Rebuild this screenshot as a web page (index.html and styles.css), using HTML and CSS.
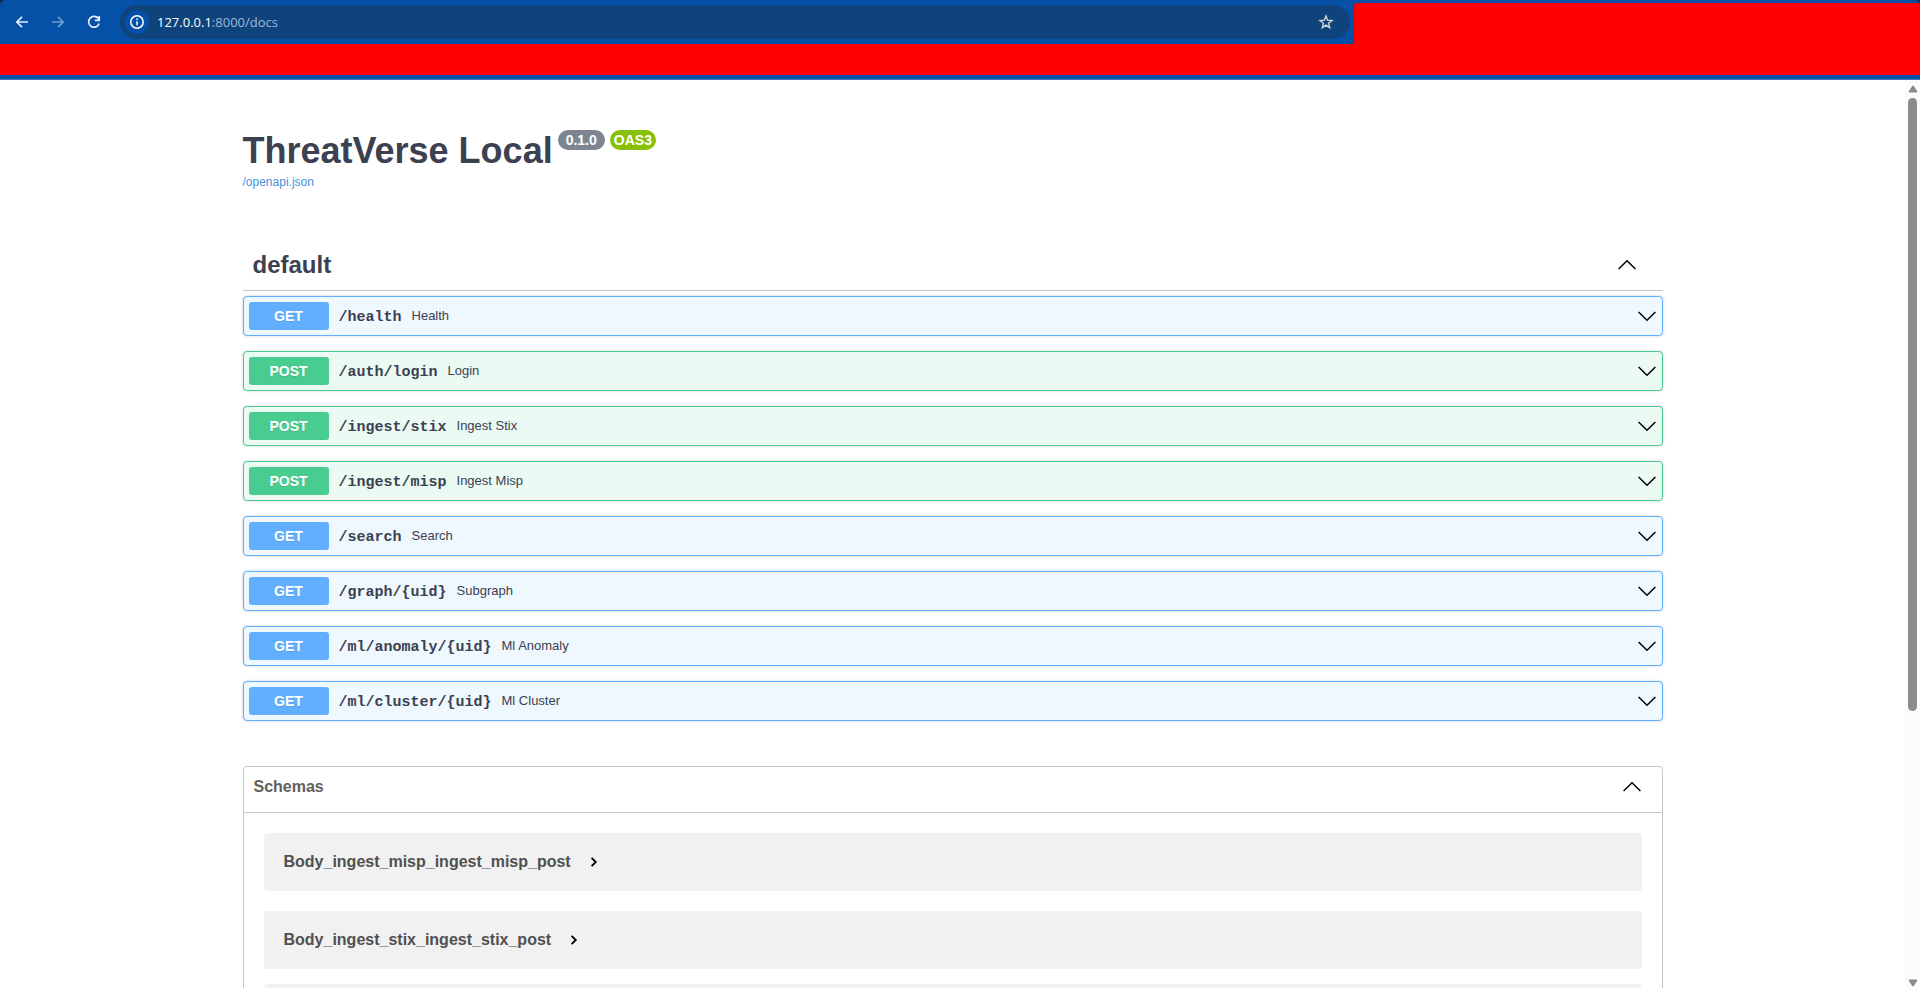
FILE: index.html
```html
<!DOCTYPE html>
<html lang="en">
<head>
<meta charset="utf-8">
<title>ThreatVerse Local</title>
<link rel="stylesheet" href="styles.css">
</head>
<body>
<svg class="defs" aria-hidden="true">
  <symbol id="up" viewBox="0 0 20 20"><path d="M1.600 14 10 5.800 18.400 14" /></symbol>
  <symbol id="down" viewBox="0 0 20 20"><path d="M1.600 6 10 14.200 18.400 6" /></symbol>
  <symbol id="right" viewBox="0 0 12 12"><path d="M3.600 1.800 7.800 6 3.600 10.200" /></symbol>
</svg>
<header class="browser">
  <div class="toolbar">
    <nav class="nav">
      <button class="icon-btn" aria-label="Back"><svg viewBox="0 0 16 16"><path d="M14 8H3M8 2.800 2.800 8 8 13.200" /></svg></button>
      <button class="icon-btn faded" aria-label="Forward"><svg viewBox="0 0 16 16"><path d="M2 8h11M8 2.800 13.200 8 8 13.200" /></svg></button>
      <button class="icon-btn" aria-label="Reload"><svg viewBox="0 0 16 16"><path d="M12.600 4.900A5.400 5.400 0 1 0 13.200 9.400M13.200 2v4.400H8.800" /></svg></button>
    </nav>
    <div class="address">
      <button class="info" aria-label="Site information"><svg viewBox="0 0 16 16"><circle cx="8" cy="8" r="6.200" /><path d="M8 7.200v4M8 4.600v1.400" /></svg></button>
      <span class="url"><b>127.0.0.1</b>:8000/docs</span>
      <button class="star" aria-label="Bookmark"><svg viewBox="0 0 16 16"><path d="M8 2 9.600 6.200l4.400.3-3.400 2.800 1.100 4.300L8 11.200l-3.700 2.400 1.100-4.300L2 6.500l4.400-.3z" /></svg></button>
    </div>
    <div class="cover"></div>
  </div>
  <div class="bookmarks"></div>
</header>
<div class="viewport">
  <main class="page">
    <section class="info-block">
      <h1 class="title">ThreatVerse Local <span class="badges"><span class="badge">0.1.0</span><span class="badge oas">OAS3</span></span></h1>
      <a class="spec" href="#">/openapi.json</a>
    </section>
    <section class="tag">
      <h2 class="tag-head">default<button class="toggle" aria-label="Collapse default"><svg><use href="#up" /></svg></button></h2>
      <div class="ops">
        <button class="op get"><span class="method">GET</span><span class="path">/health</span><span class="desc">Health</span><svg><use href="#down" /></svg></button>
        <button class="op post"><span class="method">POST</span><span class="path">/auth/login</span><span class="desc">Login</span><svg><use href="#down" /></svg></button>
        <button class="op post"><span class="method">POST</span><span class="path">/ingest/stix</span><span class="desc">Ingest Stix</span><svg><use href="#down" /></svg></button>
        <button class="op post"><span class="method">POST</span><span class="path">/ingest/misp</span><span class="desc">Ingest Misp</span><svg><use href="#down" /></svg></button>
        <button class="op get"><span class="method">GET</span><span class="path">/search</span><span class="desc">Search</span><svg><use href="#down" /></svg></button>
        <button class="op get"><span class="method">GET</span><span class="path">/graph/{uid}</span><span class="desc">Subgraph</span><svg><use href="#down" /></svg></button>
        <button class="op get"><span class="method">GET</span><span class="path">/ml/anomaly/{uid}</span><span class="desc">Ml Anomaly</span><svg><use href="#down" /></svg></button>
        <button class="op get"><span class="method">GET</span><span class="path">/ml/cluster/{uid}</span><span class="desc">Ml Cluster</span><svg><use href="#down" /></svg></button>
      </div>
    </section>
    <section class="schemas">
      <h3 class="schemas-head">Schemas<button class="toggle" aria-label="Collapse schemas"><svg><use href="#up" /></svg></button></h3>
      <div class="models">
        <button class="model">Body_ingest_misp_ingest_misp_post<svg><use href="#right" /></svg></button>
        <button class="model">Body_ingest_stix_ingest_stix_post<svg><use href="#right" /></svg></button>
        <div class="model"></div>
      </div>
    </section>
  </main>
  <div class="scrollbar" aria-hidden="true">
    <svg viewBox="0 0 10 8"><path d="M4.200 1 .8 6.200Q.5 7.500 1.500 7.500h7Q9.500 7.500 9.200 6.200L5.800 1Q5 .2 4.200 1z" /></svg>
    <div class="track"><div class="thumb"></div></div>
    <svg viewBox="0 0 10 8"><path d="M4.200 7 .8 1.800Q.5 .5 1.500 .5h7Q9.500 .5 9.200 1.800L5.800 7Q5 7.800 4.200 7z" /></svg>
  </div>
</div>
</body>
</html>
```
FILE: styles.css
```css
* { box-sizing: border-box; }
body {
  margin: 0;
  height: 100vh;
  display: flex;
  flex-direction: column;
  overflow: hidden;
  background: #fff;
  color: #3b4151;
  font-family: "Liberation Sans", Arial, sans-serif;
}
button {
  margin: 0;
  padding: 0;
  border: 0;
  background: none;
  color: inherit;
  font: inherit;
  text-align: left;
}
svg { display: block; fill: none; stroke: currentColor; }
.defs { position: absolute; width: 0; height: 0; }

.browser { flex: none; background: #0a2d57; border-bottom: 1px solid #3a78bd; }
.toolbar { display: flex; height: 44px; border-radius: 6px 6px 0 0; background: #0551a8; }
.nav { display: flex; gap: 20px; align-items: center; padding: 0 18px 0 14px; }
.icon-btn { color: #e6eefa; }
.icon-btn svg { width: 16px; height: 16px; stroke-width: 1.7; }
.icon-btn.faded { color: #6d9bd0; }
.address {
  flex: 1;
  display: flex;
  align-items: center;
  margin: 5px 4px 5px 0;
  padding: 0 16px 0 5px;
  border-radius: 17px;
  background: #0f437c;
}
.info {
  display: grid;
  place-items: center;
  width: 24px;
  height: 24px;
  border-radius: 12px;
  background: #0551a8;
  color: #fff;
}
.info svg { width: 16px; height: 16px; stroke-width: 1.5; }
.url {
  flex: 1;
  margin-left: 8px;
  font: 13px/20px "Open Sans", sans-serif;
  color: #9db9dc;
}
.url b { font-weight: 400; color: #fff; }
.star { color: #d3d6da; }
.star svg { width: 16px; height: 16px; stroke-width: 1.4; }
.cover {
  flex: none;
  width: 566px;
  margin-top: 3px;
  border-top-left-radius: 3px;
  background: #f00;
}
.bookmarks { height: 31px; background: #f00; border-bottom: 0; }
.browser::after { content: ""; display: block; height: 4px; background: #0551a8; }

.viewport { flex: 1; min-height: 0; display: flex; }
.page {
  flex: 1;
  max-width: 1460px;
  margin: 0 auto;
  padding: 0 20px;
  overflow: hidden;
}
.info-block { padding: 50px 0 48px; }
.title { display: flex; gap: 5px; margin: 0; font-size: 36px; line-height: 42px; }
.badges { display: flex; gap: 5px; align-items: flex-start; }
.badge {
  padding: 2px 8px;
  border-radius: 20px;
  background: #7d8492;
  color: #fff;
  font-size: 14px;
  line-height: 16px;
}
.badge.oas { padding: 2px 4px; background: #89bf04; }
.spec { display: block; font-size: 12px; line-height: 20px; color: #4990e2; text-decoration: none; }
.tag-head {
  display: flex;
  align-items: center;
  margin: 0 0 5px;
  padding: 10px 26px 10px 10px;
  border-bottom: 1px solid #c4c6ca;
  font-size: 24px;
  line-height: 30px;
}
.toggle { margin-left: auto; color: #000; }
.toggle svg { width: 20px; height: 20px; stroke-width: 1.5; }
.ops { display: grid; gap: 15px; }
.op {
  display: flex;
  align-items: center;
  gap: 10px;
  padding: 5px;
  border: 1px solid;
  border-radius: 4px;
  box-shadow: 0 0 3px rgba(0, 0, 0, .19);
}
.op.get { border-color: #61affe; background: #eff7ff; }
.op.post { border-color: #49cc90; background: #ebfaf3; }
.method {
  width: 80px;
  border-radius: 3px;
  color: #fff;
  font-size: 14px;
  font-weight: 700;
  line-height: 28px;
  text-align: center;
  text-shadow: 0 1px 0 rgba(0, 0, 0, .1);
}
.get .method { background: #61affe; }
.post .method { background: #49cc90; }
.path { padding-top: 3px; font: 700 15px/20px "Liberation Mono", monospace; }
.desc { flex: 1; padding-bottom: 1px; font-size: 13px; line-height: 18px; }
.op svg { width: 20px; height: 20px; stroke-width: 1.5; color: #000; }
.schemas { margin-top: 45px; border: 1px solid #c4c6cb; border-radius: 4px; }
.schemas-head {
  display: flex;
  align-items: center;
  margin: 0;
  padding: 10px 20px 15px 10px;
  border-bottom: 1px solid #c4c6cb;
  color: #606060;
  font-size: 16px;
  line-height: 20px;
}
.models { display: flex; flex-direction: column; padding: 20px 20px 5px; }
.model {
  display: flex;
  align-items: center;
  gap: 17px;
  min-height: 58px;
  margin-bottom: 15px;
  padding: 0 20px;
  border-radius: 4px;
  background: #f1f1f1;
  color: #505050;
  font-size: 16px;
  font-weight: 700;
}
.model:first-child { margin-bottom: 20px; }
.model svg { width: 12px; height: 12px; stroke-width: 1.8; color: #000; }

.scrollbar {
  display: flex;
  flex-direction: column;
  align-items: center;
  gap: 5px;
  width: 15px;
  padding: 5px 0 1px;
  background: #fcfcfc;
}
.scrollbar svg { width: 10px; height: 8px; fill: #8b8b8b; stroke: none; }
.track { flex: 1; }
.thumb { width: 9px; height: 70%; border-radius: 5px; background: #8b8b8b; }
```
